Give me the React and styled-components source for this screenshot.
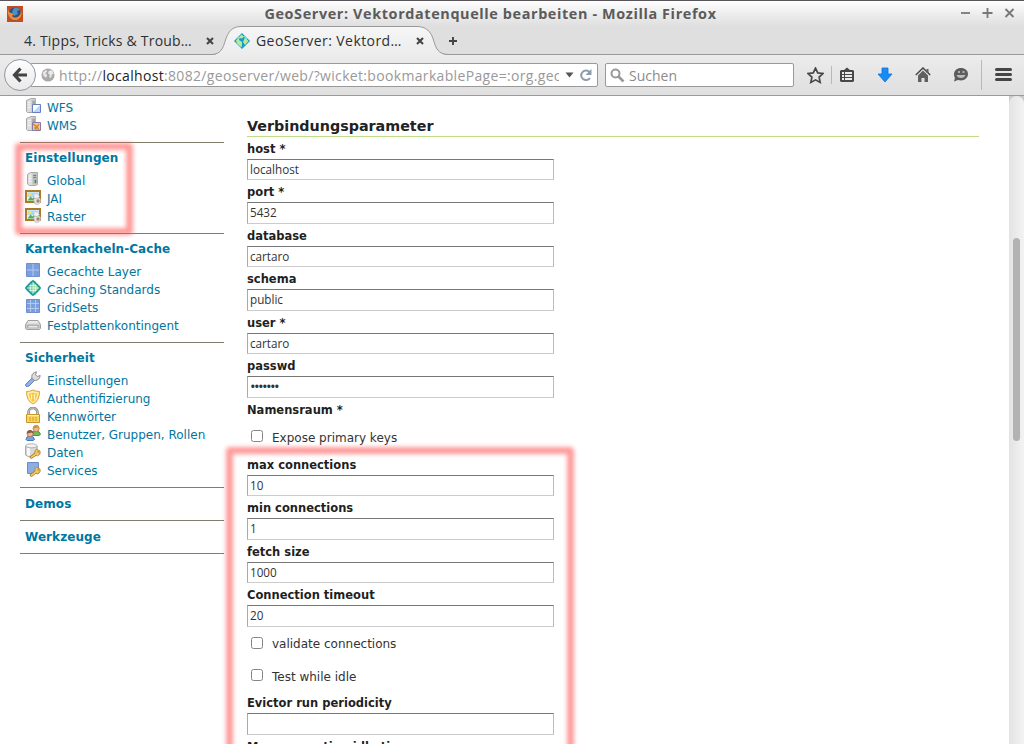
import React from "react";
import styled, { createGlobalStyle } from "styled-components";

const uiFont = '"Open Sans", "Noto Sans", sans-serif';
const pageFont = '"DejaVu Sans", sans-serif';

const GlobalStyle = createGlobalStyle`
  * { box-sizing: border-box; }
  html, body { margin: 0; padding: 0; overflow: hidden; background: #fff; }
  svg { display: block; flex: none; }
`;

const Window = styled.div`
  position: relative;
  display: flex;
  flex-direction: column;
  width: 1024px;
  height: 744px;
  overflow: hidden;
  background: #fff;
`;

const TitleBar = styled.header`
  display: grid;
  grid-template-columns: 120px 1fr 120px;
  align-items: center;
  height: 26px;
  border-top: 1px solid #57555a;
  background: linear-gradient(#fff 0, #f4f4f4 30%, #dfdfdf 100%);
`;

const AppIcon = styled.span`
  padding-left: 7px;
`;

const Title = styled.h1`
  margin: 0;
  color: #5b5b5b;
  font: 700 14.4px/22px ${uiFont};
  letter-spacing: 0.62px;
  text-align: center;
  white-space: nowrap;
  padding-right: 43px;
`;

const WindowButtons = styled.div`
  display: flex;
  justify-content: flex-end;
  gap: 10px;
  padding-right: 8px;
  margin-top: -2px;
`;

const TabStrip = styled.nav`
  display: flex;
  height: 29px;
  background: #dfdfdf;
  box-shadow: inset 0 -1px #999;
`;

const Tab = styled.div`
  position: relative;
  display: flex;
  align-items: center;
  width: ${(p) => p.$width}px;
  height: 29px;
  padding-left: ${(p) => p.$indent}px;
`;

const TabShape = styled.svg`
  position: absolute;
  left: 0;
  top: 0;
`;

const TabLabel = styled.span`
  position: relative;
  width: ${(p) => p.$width}px;
  color: #303030;
  font: 400 14px/28px ${uiFont};
  letter-spacing: ${(p) => p.$spacing}px;
  white-space: nowrap;
`;

const TabIcon = styled.span`
  position: relative;
  margin-right: 6px;
`;

const CloseGlyph = styled.span`
  position: relative;
  margin-left: ${(p) => p.$gap}px;
`;

const NewTab = styled.span`
  display: flex;
  align-items: center;
  height: 29px;
`;

const Toolbar = styled.div`
  display: flex;
  align-items: center;
  height: 41px;
  padding-left: 4px;
  border-bottom: 1px solid #9a9a9a;
  background: linear-gradient(#ececec, #dfdfdf);
`;

const BackButton = styled.span`
  position: relative;
  z-index: 1;
  display: flex;
  align-items: center;
  justify-content: center;
  width: 32px;
  height: 32px;
  margin-right: -6px;
  border: 1px solid #8f98a3;
  border-radius: 50%;
  background: linear-gradient(#fdfdfd, #e9e9e9);
`;

const Field = styled.div`
  display: flex;
  align-items: center;
  width: ${(p) => p.$width}px;
  height: 24px;
  margin-right: 7px;
  padding: 0 4px 0 ${(p) => p.$indent}px;
  border: 1px solid #999;
  border-radius: 2px;
  background: #fff;
`;

const Url = styled.span`
  width: 501px;
  margin-left: 4px;
  overflow: hidden;
  color: #999;
  font: 400 14px/22px ${uiFont};
  letter-spacing: 0.33px;
  white-space: nowrap;
  padding-top: 1px;
  b { color: #222; font-weight: 400; }
`;

const UrlActions = styled.span`
  display: flex;
  align-items: center;
  gap: 5px;
  margin-left: 6px;
`;

const Placeholder = styled.span`
  margin-left: 4px;
  padding-top: 2px;
  color: #8b8b8b;
  font: 400 14px/22px ${uiFont};
`;

const ToolIcons = styled.div`
  display: flex;
  align-items: center;
  margin-left: 6px;
`;

const ToolIcon = styled.span`
  margin-right: ${(p) => p.$gap}px;
`;

const Divider = styled.i`
  width: 1px;
  height: ${(p) => p.$height}px;
  margin-right: ${(p) => p.$gap}px;
  background: #b4b9be;
`;

const Page = styled.main`
  display: flex;
  flex: 1;
  min-height: 0;
  overflow: hidden;
  font-family: ${pageFont};
`;

const Sidebar = styled.aside`
  flex: none;
  width: 204px;
  margin-left: 20px;
  padding-top: 2px;
`;

const MenuGroup = styled.section`
  padding: 0 0 ${(p) => (p.$single ? 4 : 8)}px 5px;
  border-bottom: 1px solid #807d6d;
`;

const MenuTitle = styled.h2`
  height: 28px;
  margin: 0;
  color: #0076a1;
  font: 700 12px/${(p) => (p.$single ? 32 : 30)}px ${pageFont};
  letter-spacing: 0.07px;
`;

const MenuItem = styled.a`
  display: flex;
  align-items: center;
  gap: 6px;
  height: 18px;
  padding-top: 2px;
  color: #0076a1;
  font: 400 12px/18px ${pageFont};
  white-space: nowrap;
  svg { margin-top: -4px; }
`;

const Form = styled.form`
  flex: none;
  width: 732px;
  margin-left: 23px;
`;

const SectionTitle = styled.h3`
  height: 41px;
  margin: 0 0 -0.25px;
  padding-top: 20px;
  border-bottom: 1px solid #bfdd87;
  color: #222;
  font: 700 14.3px/20px ${pageFont};
`;

const Label = styled.label`
  display: block;
  height: 22px;
  color: #1f1f1f;
  font: 700 11.5px/24px ${pageFont};
`;

const Value = styled.div`
  width: 307px;
  height: 21.5px;
  padding-left: 2px;
  border: 1px solid;
  border-color: #777 #bbb #ccc #aaa;
  color: #333;
  font: 400 ${(p) => (p.$dots ? 15 : 11.7)}px/19px ${uiFont};
  letter-spacing: ${(p) => (p.$dots ? -1.65 : 0)}px;
`;

const CheckRow = styled.label`
  display: flex;
  align-items: center;
  gap: 9px;
  height: ${(p) => p.$height}px;
  padding-left: 4px;
  color: #333;
  font: 400 12px/18px ${pageFont};
  span { padding-top: 3px; }
`;

const CheckBox = styled.i`
  width: 12px;
  height: 12px;
  border: 1px solid #858585;
  border-radius: 2.5px;
  background: #fff;
`;

const ScrollGutter = styled.div`
  width: 15px;
  margin-left: auto;
  background: #c9c9c9;
`;

const ScrollTrack = styled.div`
  height: 100%;
  padding: 142px 4px 0;
  border-radius: 8px 8px 0 0;
  background: linear-gradient(90deg, #e3e3e3, #f3f3f3);
`;

const ScrollThumb = styled.div`
  width: 7px;
  height: 203px;
  border-radius: 4px;
  background: #b2b2b2;
`;

const Marker = styled.div`
  position: absolute;
  left: ${(p) => p.$x}px;
  top: ${(p) => p.$y}px;
  width: ${(p) => p.$w}px;
  height: ${(p) => p.$h}px;
  border: 7px solid rgba(255, 75, 75, 0.56);
  border-radius: 4px;
  filter: blur(1.9px);
  pointer-events: none;
`;

const Svg = ({ size = 16, children, ...rest }) => (
  <svg width={size} height={size} viewBox="0 0 16 16" {...rest}>{children}</svg>
);

const Server = () => (
  <>
    <path d="M1.500 2.500 6 .5h4.500v12L8 14.500H2.500l-1-1z" fill="#dcdcdc" stroke="#a8a8a8" />
    <path d="M6.500 1.500h4v11l-2 1.500h-2z" fill="#bfc2bf" />
    <path d="M3 4.500h2.500M3 7h2.500M3 9.500h2.500" stroke="#f8f8f8" />
    <path d="M7.500 4h2.500M7.500 6h2.500" stroke="#858585" />
  </>
);

const Key = () => (
  <g fill="none" strokeLinecap="round">
    <path d="m10.500 11-4.200 3.200" stroke="#ad7b21" strokeWidth="3" />
    <path d="M12 6.500 15 8v3l-2.500 1.800L10 11V8z" fill="#f7d06a" stroke="#b98a2c" />
    <path d="m11 10.800-4.500 3.300" stroke="#f7ce62" strokeWidth="1.600" />
    <circle cx="12.800" cy="9" r=".8" fill="#fff" stroke="#ad7b21" strokeWidth=".6" />
  </g>
);

const Person = ({ x, y, hair, shirt, edge }) => (
  <g transform={`translate(${x} ${y})`}>
    <path d="M.5 9.500Q.5 6 4.500 6t4.500 3.500l-1.500 1h-6z" fill={shirt} stroke={edge} />
    <circle cx="4.600" cy="3.700" r="3" fill="#efb890" stroke="#b57045" strokeWidth=".7" />
    <path d="M1.300 3.800C.7-1 8.300-1.200 8 3.800L6 2.500z" fill={hair} />
  </g>
);

const Raster = () => (
  <Svg>
    <path d="M1 2h14v11H1z" fill="#e5f5fb" stroke="#ad7a2c" strokeWidth="2" />
    <path d="M2.500 3.500h11V8h-11z" fill="#a5d9f2" />
    <path d="m2.500 11.500 3-4 2 2 2-2.500 3 4.500z" fill="#61ab4a" />
    <circle cx="5" cy="5.500" r="1.500" fill="#ffe24d" />
    <path d="m9 6 1-1.500 1.500.5L13 4.500v2l1.500 1-2 2H9z" fill="#f1f1f1" stroke="#c4c4c4" strokeWidth=".6" />
    <path d="m8.500 11 1.500-2 2 .5 2-1 1.500 2v3L13 15.500l-3-.5z" fill="#e3e3e3" stroke="#aaa" strokeWidth=".6" />
    <circle cx="13" cy="12" r="1.700" fill="#a68672" />
  </Svg>
);

const Globe = () => (
  <Svg>
    <path d="M6 .7h4l1.500 2L14 5l1.300 1.500v3L14 11l-2.500 2.500-1.500 1.800H6l-1.500-2L2 11 .7 9.500v-3L2 5l2.500-2.500z" fill="#65c8b3" />
    <path d="M8 2.500h2.500l2 2.500L14 8l-2 3-2 1.500H8z" fill="#a7dc91" />
    <path d="M5.500 3v10M8 1.500v13M10.500 3v10M3 5.500h10M1.500 8h13M3 10.500h10" stroke="#e6fff0" strokeWidth=".7" />
    <path d="m8 .8 7.200 7.200L8 15.200.8 8z" fill="none" stroke="#13979c" strokeWidth="1.400" />
  </Svg>
);

const Favicon = () => (
  <Svg>
    <path d="m8 0 8 8-8 8-8-8z" fill="#179bc2" />
    <path d="m7.500 1.500 2.500 2-2 2-2.500-.5L5 7l3 2v3l-.5 2.500-4.500-4-1-3zM11 4.500l3.500 3.500L11 12l-2-3z" fill="#bde79b" />
    <path d="m3 5 2-1M10 3l3 3M4 12l2 1" stroke="#72dbea" strokeWidth="1.500" />
  </Svg>
);

const Grid = ({ cells }) => (
  <Svg>
    <path d="M1.500 1.500h13v13h-13z" fill="#7b9fdd" stroke="#6f8fd2" />
    {(cells === 2 ? [8] : [5.500, 10.500]).map((n) => (
      <path key={n} d={`M${n} 2v12M2 ${n}h12`} stroke="#b3c8f2" strokeWidth="1" />
    ))}
  </Svg>
);

const icons = {
  wfs: () => <Svg><Server /><path d="M7.500 6.500h8v8h-8z" fill="#fff" stroke="#6480c0" /><path d="m8 14 7-7v7z" fill="#bdd3f7" /></Svg>,
  wms: () => (
    <Svg>
      <Server />
      <path d="M7.500 6.500h8v8h-8z" fill="#f0d35d" stroke="#8579ad" />
      <path d="m8 8 3 2v4M14 8l-2 3 2 3" fill="none" stroke="#e06b4b" strokeWidth="1.200" />
      <path d="M9 12h2" stroke="#61a45a" />
    </Svg>
  ),
  server: () => (
    <Svg>
      <path d="m2.500 3.500 3-2h7v12l-2 1h-6l-2-1.500z" fill="#dedede" stroke="#a8a8a8" />
      <path d="M7.500 2.500h5v11h-5z" fill="#b9bcb9" />
      <path d="M4 5h2M4 7.500h2M4 10h2" stroke="#fff" />
      <path d="M8.500 4.500h2.500M8.500 6.500h2.500" stroke="#777" />
      <path d="M10.500 9v3" stroke="#438348" strokeWidth="1.500" />
    </Svg>
  ),
  raster: Raster,
  globe: Globe,
  layer: () => <Grid cells={2} />,
  grid: () => <Grid cells={3} />,
  drive: () => (
    <Svg>
      <path d="M3 4.500h10l2.500 4v4l-1 1h-13l-1-1v-4z" fill="#dcdcdc" stroke="#a0a0a0" />
      <path d="M1.500 8.500h13v4h-13z" fill="#b2b2b2" />
      <path d="M3.500 10h9v1.500h-9z" fill="#e9e9e9" />
      <path d="M3.500 6h9" stroke="#f8f8f8" />
    </Svg>
  ),
  wrench: () => (
    <Svg>
      <path d="m1 13 6-6 2.500 2.500L4 15q-2 1.500-3.200 0-.8-1 .2-2z" fill="#8eb3e9" stroke="#6484c0" />
      <path d="M7 7.500Q6 3 9.500 1.500l2-.7-1 3 1.700 1.700 3-1q-.7 5-5.500 5z" fill="#ddd" stroke="#8c8c8c" />
    </Svg>
  ),
  shield: () => (
    <Svg>
      <path d="M1.500 2.500q3.500 0 6.500-1.500 3 1.500 6.500 1.500 0 9.500-6.500 12.500-6.500-3-6.500-12.500z" fill="#ffe389" stroke="#dcaa35" />
      <path d="M3.500 4q2.500 0 4.500-1 2 1 4.500 1 0 7-4.500 9.500Q3.500 11 3.500 4z" fill="#f5c63b" stroke="#fff4c4" />
      <path d="M6.500 5v5.500M9.500 5v5.500" stroke="#fff4be" strokeWidth="1.300" />
    </Svg>
  ),
  lock: () => (
    <Svg>
      <path d="M3.500 8V5.500a4.500 4.500 0 0 1 9 0V8" fill="none" stroke="#888" strokeWidth="2.600" />
      <path d="M3.500 8V5.500a4.500 4.500 0 0 1 9 0V8" fill="none" stroke="#ccc" />
      <path d="M1.500 7.500h13v8h-13z" fill="#f8d65e" stroke="#c8952e" />
      <path d="M2.500 8.500h11" stroke="#fff1a9" />
      <path d="M4 11h2m1 0h2m1 0h2M4 13h2m1 0h2m1 0h2" stroke="#d29a33" />
    </Svg>
  ),
  users: () => (
    <Svg>
      <Person x={6.500} y={0} hair="#c9953e" shirt="#74b856" edge="#4a9a44" />
      <Person x={0.500} y={5} hair="#8a5a42" shirt="#73a5e0" edge="#4478c0" />
    </Svg>
  ),
  data: () => (
    <Svg>
      <path d="M.6 3v9q5 4 11.500 0V3" fill="#d9d9d9" stroke="#a5a5a5" />
      <path d="M3.500 5v7.500" stroke="#f7f7f7" strokeWidth="3" />
      <ellipse cx="6.400" cy="2.800" rx="5.700" ry="2" fill="#f3f3f3" stroke="#b0b0b0" />
      <Key />
    </Svg>
  ),
  service: () => <Svg><path d="M2.500 1.500h11v11h-11z" fill="#8daee5" stroke="#6e8cca" /><Key /></Svg>,
};

const menu = [
  { items: [["wfs", "WFS"], ["wms", "WMS"]] },
  { title: "Einstellungen", items: [["server", "Global"], ["raster", "JAI"], ["raster", "Raster"]] },
  {
    title: "Kartenkacheln-Cache",
    items: [["layer", "Gecachte Layer"], ["globe", "Caching Standards"], ["grid", "GridSets"], ["drive", "Festplattenkontingent"]],
  },
  {
    title: "Sicherheit",
    items: [
      ["wrench", "Einstellungen"], ["shield", "Authentifizierung"], ["lock", "Kennwörter"],
      ["users", "Benutzer, Gruppen, Rollen"], ["data", "Daten"], ["service", "Services"],
    ],
  },
  { title: "Demos", items: [] },
  { title: "Werkzeuge", items: [] },
];

const TextField = ({ label, value, dots }) => (
  <div>
    <Label>{label}</Label>
    <Value $dots={dots}>{value}</Value>
  </div>
);

const Check = ({ label, height = 32.25 }) => (
  <CheckRow $height={height}><CheckBox /><span>{label}</span></CheckRow>
);

const Close = () => (
  <svg width="8" height="8" viewBox="0 0 8 8"><path d="m1 1 6 6m0-6L1 7" stroke="#444" strokeWidth="2.100" /></svg>
);

export default function App() {
  return (
    <Window>
      <GlobalStyle />
      <TitleBar>
        <AppIcon>
          <Svg>
            <path d="M0 0h16v16H0z" fill="#c64b25" />
            <circle cx="8" cy="8" r="6.500" fill="#285283" />
            <path d="M7 2q4-1 6 2l-3 1 1 3-4 2-2-4z" fill="#4e8fc2" />
            <path d="M1 2q0 4 3 5l3 1-2 2q3 3 7 0 2-2 2-6 2 6-2 9-5 3-9-1Q0 8 1 2z" fill="#f18a31" />
          </Svg>
        </AppIcon>
        <Title>GeoServer: Vektordatenquelle bearbeiten - Mozilla Firefox</Title>
        <WindowButtons>
          {["M1 6h9", "M.5 6h10M5.500 1v10", "m1.500 2 8 8m0-8-8 8"].map((d) => (
            <svg key={d} width="12" height="12" viewBox="0 0 12 12"><path d={d} stroke="#777" strokeWidth="1.800" /></svg>
          ))}
        </WindowButtons>
      </TitleBar>
      <TabStrip>
        <Tab $width={212} $indent={24}>
          <TabLabel $width={168} $spacing={0.21}>4. Tipps, Tricks &amp; Troub…</TabLabel>
          <CloseGlyph $gap={14}><Close /></CloseGlyph>
        </Tab>
        <Tab $width={236} $indent={22}>
          <TabShape width="236" height="29" viewBox="0 0 236 29">
            <defs><linearGradient id="tab" x2="0" y2="1"><stop stopColor="#f6f6f6" /><stop offset="1" stopColor="#ececec" /></linearGradient></defs>
            <path d="M0 29C9 28.500 11 22 13.500 14S20 .5 29 .5h176c9 0 14 5 16.500 13.500S226 28.500 236 29z" fill="url(#tab)" />
            <path d="M0 28.500C9 28 11 22 13.500 14S20 .5 29 .5h176c9 0 14 5 16.500 13.500S226 28 236 28.500" fill="none" stroke="#999" />
          </TabShape>
          <TabIcon><Favicon /></TabIcon>
          <TabLabel $width={147} $spacing={0.43}>GeoServer: Vektord…</TabLabel>
          <CloseGlyph $gap={13}><Close /></CloseGlyph>
        </Tab>
        <NewTab><svg width="10" height="10" viewBox="0 0 10 10"><path d="M5 1v8M1 5h8" stroke="#444" strokeWidth="1.900" /></svg></NewTab>
      </TabStrip>
      <Toolbar>
        <BackButton>
          <svg width="16" height="16" viewBox="0 0 16 16"><path d="M8.500 1.500 2.500 8l6 6.500M3 8h12" fill="none" stroke="#444" strokeWidth="3.200" /></svg>
        </BackButton>
        <Field $width={568} $indent={10}>
          <Svg size={14}>
            <circle cx="8" cy="8" r="7.500" fill="#aaa" />
            <path d="m2 5 4-3 1 2-2 2 2 2-1 3-3-2zM9 3l4-.5 1.500 4-2 1-1 4-2-1 .5-3-2-1z" fill="#e8e8e8" />
          </Svg>
          <Url>http://<b>localhost</b>:8082/geoserver/web/?wicket:bookmarkablePage=:org.gec</Url>
          <UrlActions>
            <svg width="9" height="6" viewBox="0 0 9 6"><path d="M.5.5h8L4.500 5.500z" fill="#555" /></svg>
            <svg width="14" height="14" viewBox="0 0 14 14"><path d="M11 10A4.800 4.800 0 1 1 10.500 4" fill="none" stroke="#8d9bac" strokeWidth="2" /><path d="M12.500 1v6h-6z" fill="#8d9bac" /></svg>
          </UrlActions>
        </Field>
        <Field $width={189} $indent={4}>
          <svg width="15" height="15" viewBox="0 0 15 15"><circle cx="5.500" cy="5.500" r="4" fill="none" stroke="#999" strokeWidth="2" /><path d="m8.500 8.500 5 5" stroke="#999" strokeWidth="2.600" /></svg>
          <Placeholder>Suchen</Placeholder>
        </Field>
        <ToolIcons>
          <ToolIcon $gap={7}>
            <Svg size={17}><path d="m8 1 2.100 4.500 5 .6-3.700 3.400 1 5L8 12.100l-4.400 2.400 1-5L.9 6.100l5-.6z" fill="none" stroke="#484848" strokeWidth="1.600" /></Svg>
          </ToolIcon>
          <Divider $height={18} $gap={7} />
          <ToolIcon $gap={22}>
            <Svg>
              <path d="M2 3h3l3-2.500L11 3h3l1 1v10l-1 1H2l-1-1V4z" fill="#484848" />
              <path d="M3 5h2v2H3zm3 0h7v2H6zM3 8h2v2H3zm3 0h7v2H6zM3 11h2v2H3zm3 0h7v2H6z" fill="#ededed" />
            </Svg>
          </ToolIcon>
          <ToolIcon $gap={22}>
            <Svg><path d="M5 1h6v6h4l-7 8-7-8h4z" fill="#168df5" stroke="#0873d5" strokeWidth=".8" /></Svg>
          </ToolIcon>
          <ToolIcon $gap={22}>
            <Svg>
              <path d="m.8 8 7.200-7 7.200 7" fill="none" stroke="#484848" strokeWidth="1.500" />
              <path d="m3 8.500 5-5 5 5V15H9.500v-4h-3v4H3zM11.500 2h2v4h-2z" fill="#606060" />
            </Svg>
          </ToolIcon>
          <ToolIcon $gap={12}>
            <Svg>
              <path d="M8 1c4 0 7 2.500 7 6s-3 6.500-7 6.500c-1 0-2-.2-3-.5l-4 1.500L2 11Q1 9.500 1 7.500C1 3.500 4 1 8 1z" fill="#5c5c5c" />
              <path d="M5 5h2M9.500 5h2" stroke="#ccc" strokeWidth="1.600" />
              <path d="M3.500 8h9q-1 3-4.500 3T3.500 8z" fill="#bbb" />
            </Svg>
          </ToolIcon>
          <Divider $height={30} $gap={13} />
          <svg width="17" height="16" viewBox="0 0 17 16"><path d="M1.500 2.500h14M1.500 7.500h14M1.500 12.500h14" stroke="#454545" strokeWidth="3" strokeLinecap="round" /></svg>
        </ToolIcons>
      </Toolbar>
      <Page>
        <Sidebar>
          {menu.map((group) => {
            const single = group.items.length === 0;
            return (
              <MenuGroup key={group.title || "top"} $single={single}>
                {group.title && <MenuTitle $single={single}>{group.title}</MenuTitle>}
                {group.items.map(([icon, text]) => {
                  const Icon = icons[icon];
                  return <MenuItem key={text}><Icon />{text}</MenuItem>;
                })}
              </MenuGroup>
            );
          })}
        </Sidebar>
        <Form>
          <SectionTitle>Verbindungsparameter</SectionTitle>
          <TextField label="host *" value="localhost" />
          <TextField label="port *" value="5432" />
          <TextField label="database" value="cartaro" />
          <TextField label="schema" value="public" />
          <TextField label="user *" value="cartaro" />
          <TextField label="passwd" value="•••••••" dots />
          <Label>Namensraum *</Label>
          <Check label="Expose primary keys" height={33} />
          <TextField label="max connections" value="10" />
          <TextField label="min connections" value="1" />
          <TextField label="fetch size" value="1000" />
          <TextField label="Connection timeout" value="20" />
          <Check label="validate connections" />
          <Check label="Test while idle" />
          <TextField label="Evictor run periodicity" value="" />
          <TextField label="Max connection idle time" value="" />
        </Form>
        <ScrollGutter><ScrollTrack><ScrollThumb /></ScrollTrack></ScrollGutter>
      </Page>
      <Marker $x={15} $y={143} $w={118} $h={92} />
      <Marker $x={226} $y={447} $w={348} $h={320} />
    </Window>
  );
}
